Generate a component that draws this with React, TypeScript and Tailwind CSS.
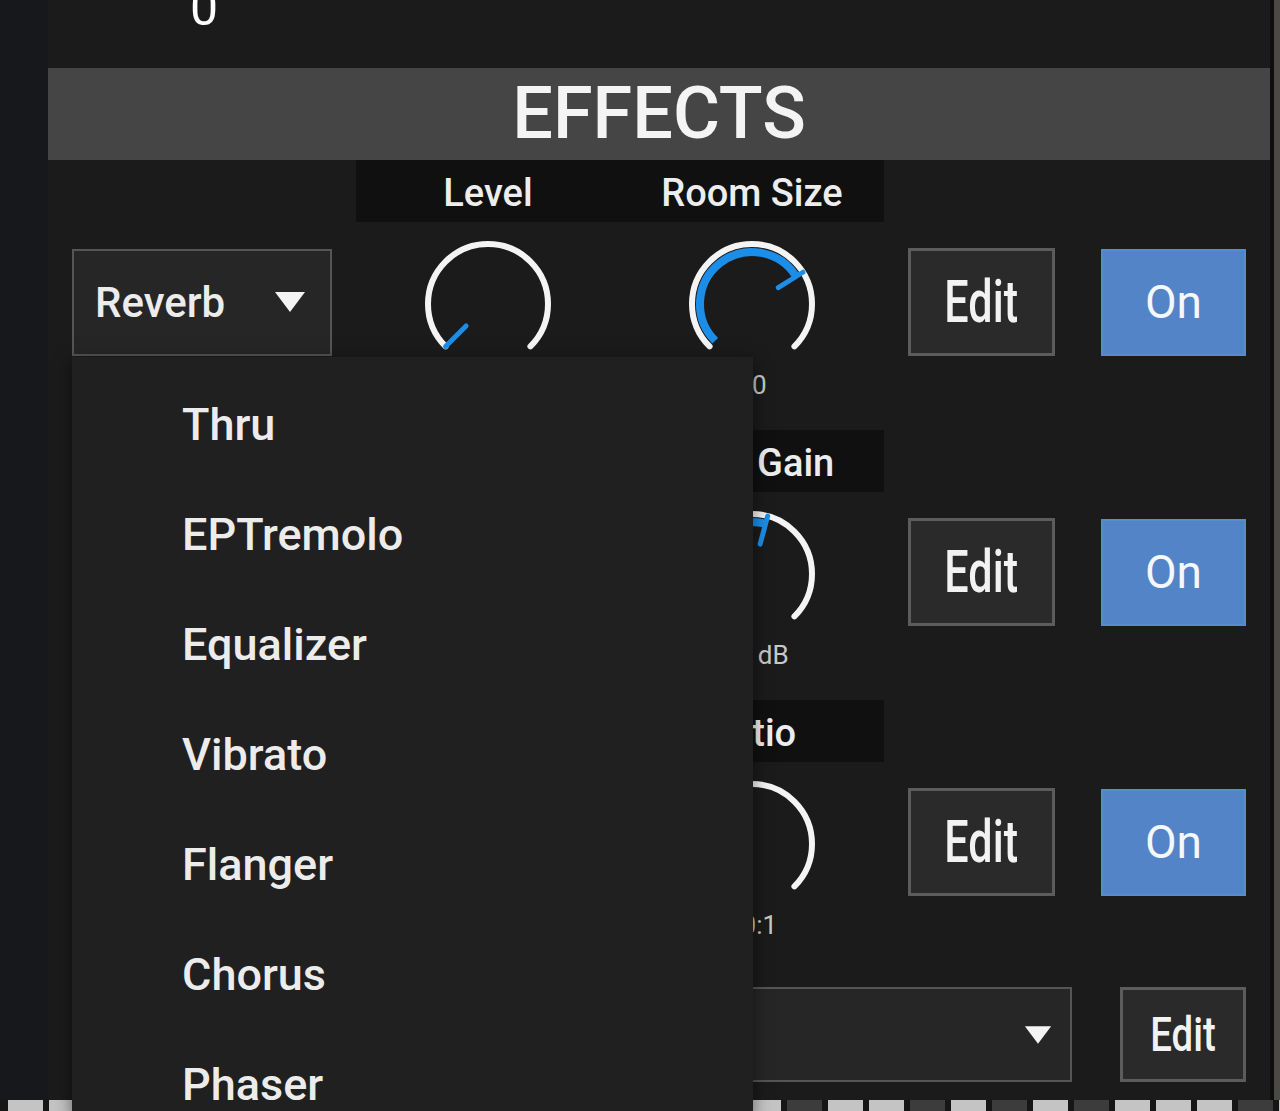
const FONT = "font-['Roboto','Liberation_Sans',sans-serif]";

const BLUE = '#1c8ee8';

function polar(r: number, deg: number) {
  const a = (deg * Math.PI) / 180;
  return [66 + r * Math.sin(a), 66 - r * Math.cos(a)];
}

function arc(r: number, from: number, to: number) {
  const [x1, y1] = polar(r, from);
  const [x2, y2] = polar(r, to);
  const large = to - from > 180 ? 1 : 0;
  return `M ${x1} ${y1} A ${r} ${r} 0 ${large} 1 ${x2} ${y2}`;
}

function Knob({ value }: { value: number }) {
  const angle = -135 + 270 * value;
  const [px1, py1] = polar(60, angle);
  const [px2, py2] = polar(31, angle);
  return (
    <svg width="132" height="132" viewBox="0 0 132 132" className="shrink-0">
      <path d={arc(60, -135, 135)} fill="none" stroke="#f4f4f4" strokeWidth="6" strokeLinecap="round" />
      {value > 0.01 && (
        <path d={arc(52, -135, angle)} fill="none" stroke={BLUE} strokeWidth="8" />
      )}
      <line x1={px1} y1={py1} x2={px2} y2={py2} stroke={BLUE} strokeWidth="5" strokeLinecap="round" />
    </svg>
  );
}

function Caret({ w = 32, h = 24 }: { w?: number; h?: number }) {
  return (
    <svg width={w} height={h} viewBox="0 0 32 24">
      <polygon points="1,2 31,2 16,22" fill="#f4f4f4" />
    </svg>
  );
}

function EditButton() {
  return (
    <div className="w-[147px] h-[108px] bg-[#2a2a2a] border-[3px] border-[#5c5c5c] flex items-center justify-center">
      <span className="inline-block text-[60px] leading-none font-medium text-[#f2f2f2] scale-x-[0.72]">Edit</span>
    </div>
  );
}

function OnButton() {
  return (
    <div className="w-[145px] h-[107px] bg-[#5384c8] border-2 border-[#5a8bd0] flex items-center justify-center">
      <span className="text-[46px] leading-none text-[#f4f7fb]">On</span>
    </div>
  );
}

type Block = {
  labels: [string, string];
  values: [number, number];
  readouts: [string, string];
  effect: string;
};

// rows 2 and 3 sit under the open menu; only their right-hand parts show
const blocks: Block[] = [
  { labels: ['Level', 'Room Size'], values: [0, 0.715], readouts: ['', '50'], effect: 'Reverb' },
  { labels: ['', 'Post Gain'], values: [0.4, 0.556], readouts: ['', '0.0 dB'], effect: '' },
  { labels: ['', 'Ratio'], values: [0.6, 0.3], readouts: ['', '10:1'], effect: '' },
];

const menuItems = ['Thru', 'EPTremolo', 'Equalizer', 'Vibrato', 'Flanger', 'Chorus', 'Phaser'];

const tiles = 'LLDLDLLDLDLDLLDLDDLDLLDLDLDLLLDL'.split('');

function EffectBlock({ b }: { b: Block }) {
  return (
    <div className="h-[270px] flex flex-col">
      <div className="h-[62px] flex pl-[308px]">
        <div className="w-[528px] bg-[#101010] flex">
          {b.labels.map((l, i) => (
            <div key={i} className="w-[264px] pt-[5px] flex items-center justify-center text-[38px] font-medium text-[#ededed] whitespace-nowrap">
              {l}
            </div>
          ))}
        </div>
      </div>
      <div className="mt-[25px] h-[110px] flex items-center pl-[24px]">
        <div className="w-[260px] h-[107px] bg-[#262626] border-2 border-[#555] flex items-center justify-between pl-[21px] pr-[24px]">
          <span className="text-[42px] font-medium text-[#ececec]">{b.effect}</span>
          <Caret />
        </div>
        <div className="w-[264px] ml-[24px] flex justify-center pt-[4px]">
          <Knob value={b.values[0]} />
        </div>
        <div className="w-[264px] flex justify-center pt-[4px]">
          <Knob value={b.values[1]} />
        </div>
        <div className="ml-[24px]">
          <EditButton />
        </div>
        <div className="ml-[46px]">
          <OnButton />
        </div>
      </div>
      <div className="mt-[15px] flex pl-[308px] text-[26px] text-[#c8c8c8] leading-none">
        {b.readouts.map((r, i) => (
          <div key={i} className="w-[264px] text-center">{r}</div>
        ))}
      </div>
    </div>
  );
}

export default function App() {
  return (
    <div className={`${FONT} relative w-[1280px] h-[1111px] overflow-hidden bg-[#1b1b1b] flex flex-col`}>
      <div className="flex h-[1100px]">
        <div className="w-[48px] bg-[#17181b]" />

        <div className="w-[1222px] flex flex-col">
          <div className="h-[68px] pl-[142px] overflow-hidden">
            <div className="-mt-[17px] text-[50px] leading-none text-white">0</div>
          </div>

          <div className="h-[92px] bg-[#454545] flex items-center justify-center">
            <span className="text-[72px] leading-none font-medium text-[#f4f4f4]">EFFECTS</span>
          </div>

          {blocks.map((b, i) => (
            <EffectBlock key={i} b={b} />
          ))}

          <div className="pt-[17px] flex pl-[24px]">
            <div className="w-[1000px] h-[95px] bg-[#262626] border-2 border-[#555] flex items-center justify-end pr-[18px]">
              <Caret w={28} h={22} />
            </div>
            <div className="ml-[48px] w-[126px] h-[95px] bg-[#2a2a2a] border-[3px] border-[#5c5c5c] flex items-center justify-center">
              <span className="inline-block text-[48px] leading-none font-medium text-[#f2f2f2] scale-x-[0.8]">Edit</span>
            </div>
          </div>
        </div>

        <div className="w-[4px] bg-[#0e0e0e]" />
        <div className="flex-1 bg-[#4a4a42]" />
      </div>

      <div className="h-[11px] flex gap-[6px] pl-[8px] bg-[#161616]">
        {tiles.map((t, i) => (
          <div key={i} className={t === 'L' ? 'w-[35px] shrink-0 bg-[#c4c4c4]' : 'w-[35px] shrink-0 bg-[#3c3c3c]'} />
        ))}
      </div>

      {/* open effect menu */}
      <div className="absolute left-[72px] top-[357px] w-[681px] h-[760px] bg-[#202020] shadow-[0_4px_16px_rgba(0,0,0,0.5)] pt-[13px] pl-[110px]">
        {menuItems.map((m) => (
          <div key={m} className="h-[110px] flex items-center text-[45px] font-medium text-[#ececec]">
            {m}
          </div>
        ))}
      </div>
    </div>
  );
}
